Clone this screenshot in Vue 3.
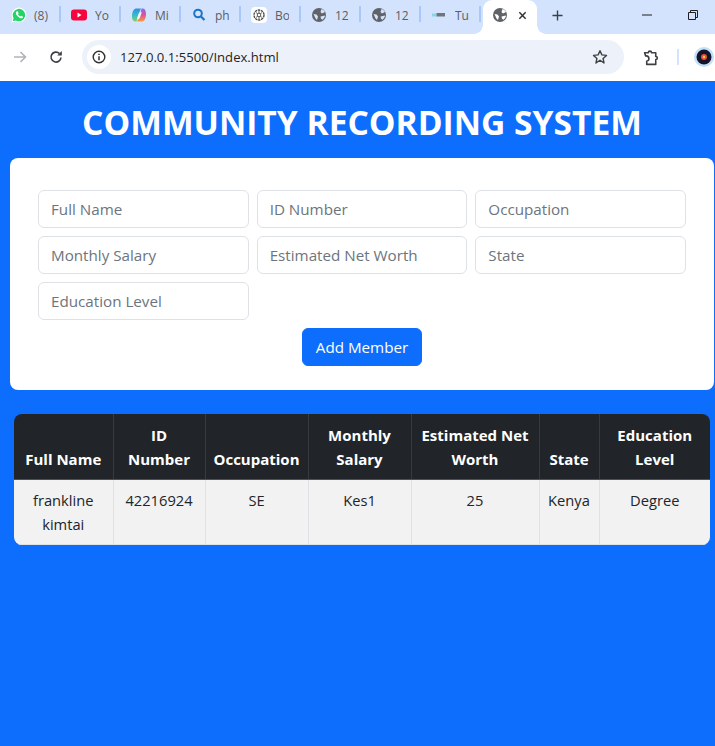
<script setup>
const tabs = [
  { label: '(8)', icon: 'wa' }, { label: 'You', icon: 'yt' }, { label: 'Mi', icon: 'co' },
  { label: 'ph', icon: 'se' }, { label: 'Bo', icon: 'gp' }, { label: '12', icon: 'gl' },
  { label: '12', icon: 'gl' }, { label: 'Tu', icon: 'tu' }
]
const fields = ['Full Name', 'ID Number', 'Occupation', 'Monthly Salary', 'Estimated Net Worth', 'State', 'Education Level']
const cols = [
  { h: 'Full Name', w: 99, v: 'frankline kimtai' }, { h: 'ID Number', w: 92, v: '42216924' },
  { h: 'Occupation', w: 103, v: 'SE' }, { h: 'Monthly Salary', w: 103, v: 'Kes1' },
  { h: 'Estimated Net Worth', w: 128, v: '25' }, { h: 'State', w: 60, v: 'Kenya' },
  { h: 'Education Level', w: 111, v: 'Degree' }
]
</script>

<template>
  <div class="window">
    <div class="tabbar">
      <div v-for="(t, i) in tabs" :key="i" class="tab">
        <svg class="fav" viewBox="0 0 16 16">
          <template v-if="t.icon === 'wa'">
            <path d="M.5 15.500l1.100-4.100a7.300 7.300 0 1 1 2.900 2.900z" fill="#fff" />
            <path d="M1.700 14.300l.9-3.100a6.200 6.200 0 1 1 2.200 2.200z" fill="#25d366" />
            <path d="M5.500 4.500c-1 1-.8 2.500.7 4.300s3.300 2.800 4.600 2.500c1-.2 1.400-1 1.300-1.600l-1.900-1-.8.9c-1-.4-2-1.400-2.500-2.500l.8-.8-.9-2z" fill="#fff" />
          </template>
          <template v-else-if="t.icon === 'yt'">
            <rect x="0" y="2.500" width="16" height="11" rx="3" fill="#f6043c" />
            <path d="M6.500 5.500l4 2.500-4 2.500z" fill="#fff" />
          </template>
          <template v-else-if="t.icon === 'co'">
            <defs>
              <linearGradient id="coA" x1="0" y1="0" x2="0" y2="1"><stop offset="0" stop-color="#2f8fe8" /><stop offset=".55" stop-color="#35c0c8" /><stop offset="1" stop-color="#8fd04a" /></linearGradient>
              <linearGradient id="coB" x1="0" y1="0" x2="0" y2="1"><stop offset="0" stop-color="#8a6be8" /><stop offset=".5" stop-color="#e0509a" /><stop offset="1" stop-color="#f6a030" /></linearGradient>
            </defs>
            <path d="M5 1.500h5L7 8.500l-1.500 6H4C2 14.500 1 12 1 9.500 1 5.500 2.500 1.500 5 1.500z" fill="url(#coA)" />
            <path d="M10.500 1.500H12c2 0 3 3 3 5.500 0 4-1.500 7.500-4 7.500H6l3-6z" fill="url(#coB)" />
            <path d="M7.500 7.500c.4-1.500 1.200-2.200 2.300-2.200h1l-1.800 5.200c-.4 1.200-1.200 1.800-2.300 1.800h-.9z" fill="#f4f2fa" />
          </template>
          <template v-else-if="t.icon === 'se'">
            <circle cx="7" cy="6.500" r="3.800" fill="none" stroke="#1a73c8" stroke-width="2" />
            <path d="M10 9.500l3.500 3.500" stroke="#1a73c8" stroke-width="2.200" />
          </template>
          <template v-else-if="t.icon === 'gp'">
            <rect width="16" height="16" rx="4" fill="#fff" />
            <circle cx="8" cy="8" r="5" fill="none" stroke="#4a4a4a" stroke-width="1.400" stroke-dasharray="2.400 .7" />
            <path d="M5 5.500l6 5M11 5.500l-6 5M8 3.500v9" stroke="#6a6a6a" stroke-width="1" />
            <circle cx="8" cy="8" r="1.800" fill="#fff" stroke="#4a4a4a" stroke-width=".9" />
          </template>
          <template v-else-if="t.icon === 'gl'">
            <circle cx="8" cy="8" r="7" fill="#5f6368" />
            <path d="M10.500 2c1.700.6 2.800 1.600 3.500 3L11 6.500 9.500 5zM2.500 7l3 .5 1.500 2-1 3.500-1.500-1.500zM9.500 9.500l4.500-1c-.2 1.600-1 3.200-2.500 4.200l-1.500-1z" fill="#d3e3fd" />
          </template>
          <template v-else>
            <path d="M1 6.500h4.500v3H1z" fill="#86d6e6" />
            <path d="M5.500 6h8.500v3.500H5.500z" fill="#70757a" />
          </template>
        </svg>
        <span class="tab-label">{{ t.label }}</span>
        <i class="sep"></i>
      </div>
      <div class="tab-active">
        <svg class="fav" viewBox="0 0 16 16">
          <circle cx="8" cy="8" r="7" fill="#5f6368" />
          <path d="M10.500 2c1.700.6 2.800 1.600 3.500 3L11 6.500 9.500 5zM2.500 7l3 .5 1.500 2-1 3.500-1.500-1.500zM9.500 9.500l4.500-1c-.2 1.600-1 3.200-2.500 4.200l-1.500-1z" fill="#fff" />
        </svg>
        <svg class="close" viewBox="0 0 10 10"><path d="M1.500 1.500l7 7M8.500 1.500l-7 7" stroke="#303134" stroke-width="1.600" /></svg>
      </div>
      <svg class="plus" viewBox="0 0 12 12"><path d="M6 .5v11M.5 6h11" stroke="#3c4043" stroke-width="1.500" /></svg>
      <div class="winctl">
        <svg class="min" viewBox="0 0 10 2"><path d="M0 1h10" stroke="#1f1f1f" /></svg>
        <svg class="restore" viewBox="0 0 10 10"><path d="M.5 2.500h7v7h-7zM2.500 2.500v-2h7v7h-2" fill="none" stroke="#1f1f1f" /></svg>
      </div>
    </div>

    <div class="toolbar">
      <svg class="arrow" viewBox="0 0 14 14"><path d="M1 7h11.500M7.500 2l5 5-5 5" fill="none" stroke="#b0b2b6" stroke-width="1.600" /></svg>
      <svg class="reload" viewBox="0 0 14 14"><path d="M12 7.500a5 5 0 1 1-1.500-4" fill="none" stroke="#3c4043" stroke-width="1.600" /><path d="M12.800 1v4.600H8.200z" fill="#3c4043" /></svg>
      <div class="omnibox">
        <span class="info-wrap">
          <svg class="info" viewBox="0 0 14 14"><circle cx="7" cy="7" r="5.800" fill="none" stroke="#303134" stroke-width="1.400" /><path d="M7 6.200v4M7 3.700v1.400" stroke="#303134" stroke-width="1.500" /></svg>
        </span>
        <span class="url">127.0.0.1:5500/Index.html</span>
        <svg class="star" viewBox="0 0 16 16"><path d="M8 1.700l1.900 4.200 4.600.5-3.400 3.100.9 4.500L8 11.200l-4 2.800.9-4.500L1.500 6.400l4.600-.5z" fill="none" stroke="#3c4043" stroke-width="1.400" stroke-linejoin="round" /></svg>
      </div>
      <svg class="ext" viewBox="0 0 16 16"><path d="M1.500 3.500h3.500a1.500 1.500 0 0 1 3 0h4v3.500a1.500 1.500 0 0 1 0 3v4.500H3.500v-3a1.500 1.500 0 0 0-1-5z" fill="none" stroke="#3c4043" stroke-width="1.500" stroke-linejoin="round" /></svg>
      <i class="tool-sep"></i>
      <svg class="avatar" viewBox="0 0 20 20">
        <circle cx="10" cy="10" r="10" fill="#c2e0f8" />
        <circle cx="10" cy="10" r="7.500" fill="#14142a" />
        <circle cx="10" cy="10" r="3" fill="#e8503a" />
        <circle cx="10" cy="10" r="1.200" fill="#f6d04a" />
      </svg>
    </div>

    <main class="page">
      <h1>COMMUNITY RECORDING SYSTEM</h1>
      <form class="card" @submit.prevent>
        <div class="grid">
          <input v-for="f in fields" :key="f" :placeholder="f" />
        </div>
        <button type="submit">Add Member</button>
      </form>
      <div class="table-wrap">
        <table>
          <colgroup><col v-for="c in cols" :key="c.h" :style="{ width: c.w + 'px' }" /></colgroup>
          <thead><tr><th v-for="c in cols" :key="c.h">{{ c.h }}</th></tr></thead>
          <tbody><tr><td v-for="c in cols" :key="c.h">{{ c.v }}</td></tr></tbody>
        </table>
      </div>
    </main>
  </div>
</template>

<style>
html, body { margin: 0; background: #0d6efd; }
</style>

<style scoped>
.window { width: 715px; height: 746px; overflow: hidden; display: flex; flex-direction: column; font-family: "Open Sans", "Noto Sans", sans-serif; }
.tabbar { height: 34px; flex: none; background: #d3e3fd; display: flex; align-items: center; padding-left: 11px; position: relative; }
.tab { width: 60px; flex: none; height: 34px; display: flex; align-items: center; position: relative; box-sizing: border-box; padding-bottom: 4px; }
.fav { width: 16px; height: 16px; flex: none; }
.tab-label { margin-left: 8px; width: 14px; overflow: hidden; white-space: nowrap; font: 12px "Open Sans", sans-serif; color: #5a5f64; }
.tab:first-child .tab-label { width: 17px; margin-left: 7px; }
.sep { position: absolute; left: 48px; top: 6px; width: 2px; height: 16px; background: #a8c7fa; }
.tab-active { width: 54px; height: 34px; margin-left: -8px; background: #fff; border-radius: 9px 9px 0 0; display: flex; align-items: center; padding: 0 0 4px 9px; box-sizing: border-box; flex: none; position: relative; }
.tab-active::before, .tab-active::after { content: ""; position: absolute; bottom: 0; width: 9px; height: 9px; }
.tab-active::before { left: -9px; background: radial-gradient(circle at 0 0, transparent 8.500px, #fff 9px); }
.tab-active::after { right: -9px; background: radial-gradient(circle at 100% 0, transparent 8.500px, #fff 9px); }
.close { width: 9px; height: 9px; margin-left: 10px; }
.plus { width: 11px; height: 11px; margin-left: 15px; flex: none; margin-bottom: 4px; }
.winctl { margin-left: auto; display: flex; align-items: center; padding: 0 17px 4px 0; }
.min { width: 10px; height: 2px; margin-right: 36px; }
.restore { width: 10px; height: 10px; }
.toolbar { height: 47px; flex: none; background: #fff; display: flex; align-items: center; box-sizing: border-box; padding-bottom: 1px; }
.arrow { width: 14px; height: 14px; margin-left: 13px; }
.reload { width: 14px; height: 14px; margin-left: 22px; }
.omnibox { width: 542px; height: 34px; margin-left: 19px; border-radius: 17px; background: #edf2fa; display: flex; align-items: center; box-sizing: border-box; padding-left: 5px; }
.info-wrap { width: 24px; height: 24px; border-radius: 50%; background: #fff; display: flex; align-items: center; justify-content: center; }
.info { width: 14px; height: 14px; }
.url { margin-left: 9px; font: 13.100px "Open Sans", sans-serif; color: #1f1f1f; }
.star { width: 16px; height: 16px; margin-left: auto; margin-right: 16px; }
.ext { width: 17px; height: 17px; margin-left: 19px; }
.tool-sep { width: 2px; height: 16px; background: #d3e3fd; margin-left: 17px; }
.avatar { width: 20px; height: 20px; margin-left: 15px; flex: none; }
.page { flex: 1; background: #0d6efd; padding: 20px 1px 0 10px; }
h1 { margin: 0 0 16px; height: 41px; padding-top: 1px; box-sizing: border-box; line-height: 41px; text-align: center; font-size: 33.600px; font-weight: 700; color: #fff; }
.card { background: #fff; border-radius: 8px; height: 232px; box-sizing: border-box; padding: 32px 28px 24px; display: flex; flex-direction: column; align-items: center; }
.grid { width: 100%; display: grid; grid-template-columns: repeat(3, 1fr); gap: 8px; }
input { box-sizing: border-box; width: 100%; height: 38px; min-width: 0; padding: 6px 12px; border: 1px solid #dee2e6; border-radius: 6px; font: 15.200px/24px "Open Sans", sans-serif; color: #212529; background: #fff; outline: none; }
input::placeholder { color: #6c757d; opacity: 1; }
button { margin-top: 8px; width: 120px; height: 38px; border: 1px solid #0d6efd; border-radius: 6px; background: #0d6efd; color: #fff; font: 15.200px "Open Sans", sans-serif; padding: 0; }
.table-wrap { margin: 24px 4px 0; width: 696px; border-radius: 8px; overflow: hidden; }
table { width: 696px; table-layout: fixed; border-collapse: collapse; text-align: center; font-size: 15px; line-height: 24px; }
th { background: #212529; color: #fff; padding: 9px 7px 8px; font-weight: 700; vertical-align: bottom; border-right: 1px solid #373b3e; border-bottom: 1px solid #4d5154; }
td { background: #f2f2f2; color: #212529; font-size: 14.700px; padding: 8px; vertical-align: top; border-right: 1px solid #dee2e6; border-bottom: 1px solid #dee2e6; }
th:last-child, td:last-child { border-right: 0; }
</style>
